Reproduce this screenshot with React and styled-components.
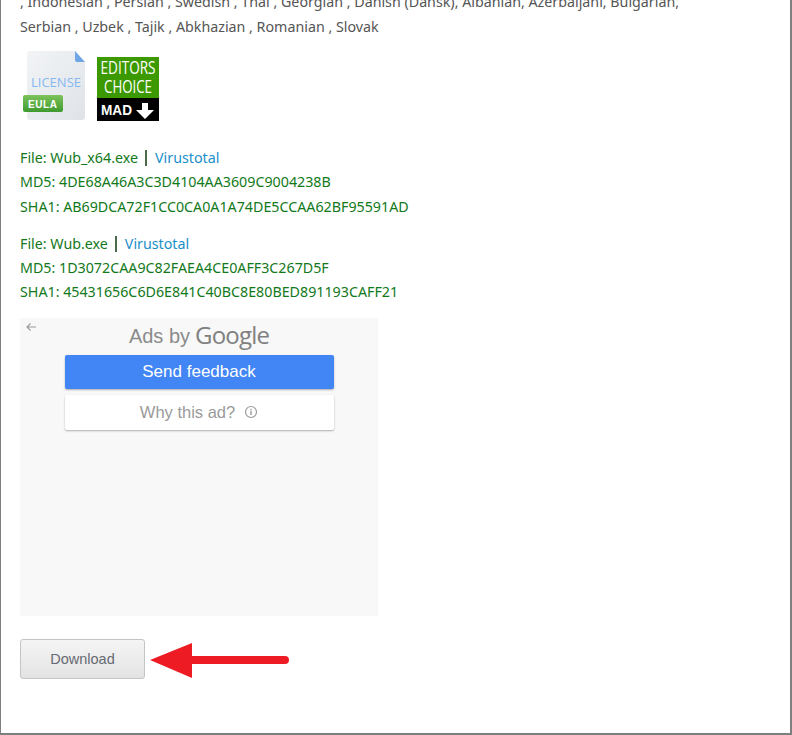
import React from 'react';
import styled, { createGlobalStyle } from 'styled-components';

const GlobalStyle = createGlobalStyle`
  html, body {
    margin: 0;
    padding: 0;
    background: #fff;
  }
`;

const Frame = styled.div`
  position: relative;
  box-sizing: border-box;
  width: 792px;
  height: 735px;
  overflow: hidden;
  background: #fff;
  border-left: 1px solid #7f7f7f;
  border-right: 2px solid #7f7f7f;
  border-bottom: 2px solid #7f7f7f;
  font-family: "Noto Sans", "Open Sans", sans-serif;
  font-size: 14.25px;
`;

const Content = styled.div`
  margin-top: -10px;
  padding-left: 19px;
  display: flex;
  flex-direction: column;
  align-items: flex-start;
`;

const Languages = styled.p`
  margin: 0;
  width: 700px;
  color: #555;
  line-height: 24.5px;
  white-space: nowrap;
`;

const Badges = styled.div`
  display: flex;
  align-items: flex-end;
  gap: 10px;
  margin-top: 12px;
  margin-left: 3px;
`;

const FileBlock = styled.div`
  margin-top: ${(props) => props.$top}px;
  color: #12791a;
  line-height: 24.4px;
`;

const FileLine = styled.div`
  display: flex;
  align-items: center;
`;

const Divider = styled.span`
  width: 2px;
  height: 16px;
  margin: 0 8px 0 7px;
  background: #4a6a4a;
`;

const FileLink = styled.a`
  color: #1a8fc9;
  text-decoration: none;
`;

const AdBox = styled.div`
  box-sizing: border-box;
  position: relative;
  width: 358px;
  height: 298px;
  margin-top: 13px;
  background: #f8f8f8;
  display: flex;
  flex-direction: column;
  align-items: center;
  font-family: "Liberation Sans", Arial, sans-serif;
`;

const BackIcon = styled.svg`
  position: absolute;
  top: 3px;
  left: 5px;
`;

const AdTitle = styled.div`
  height: 37px;
  display: flex;
  align-items: center;
  gap: 5px;
  color: #8b8b8b;
  font-size: 20px;
`;

const GoogleWord = styled.span`
  font-family: "Open Sans", "Liberation Sans", sans-serif;
  font-size: 24px;
  font-weight: 500;
  letter-spacing: -0.8px;
  color: #808080;
  margin-top: -4px;
`;

const AdButton = styled.div`
  box-sizing: border-box;
  width: 269px;
  height: ${(props) => props.$h}px;
  display: flex;
  align-items: center;
  justify-content: center;
  gap: 9px;
  border-radius: 2px;
  font-size: ${(props) => (props.$primary ? 17 : 16.5)}px;
  margin-bottom: 6px;
  background: ${(props) => (props.$primary ? '#4285f4' : '#fff')};
  color: ${(props) => (props.$primary ? '#fff' : '#9a9a9a')};
  box-shadow: 0 1px 2px rgba(0, 0, 0, 0.3);
`;

const DownloadButton = styled.button`
  box-sizing: border-box;
  width: 125px;
  height: 40px;
  margin-top: 23px;
  padding: 0;
  border: 1px solid #c4c4c4;
  border-radius: 3px;
  background: linear-gradient(#f5f5f5, #e3e3e3);
  color: #666a72;
  font-family: "Liberation Sans", Arial, sans-serif;
  font-size: 14.5px;
`;

const ArrowOverlay = styled.svg`
  position: absolute;
  left: 148px;
  top: 643px;
`;

const LicenseIcon = () => (
  <svg width="64" height="70" viewBox="0 0 64 70">
    <defs>
      <linearGradient id="page" x1="0" y1="0" x2="1" y2="1">
        <stop offset="0" stopColor="#f2f4f6" />
        <stop offset="1" stopColor="#dfe3e8" />
      </linearGradient>
      <linearGradient id="eula" x1="0" y1="0" x2="0" y2="1">
        <stop offset="0" stopColor="#7cc35a" />
        <stop offset="1" stopColor="#3f9a2f" />
      </linearGradient>
    </defs>
    <path d="M7 0H52L62 11V66a3 3 0 0 1-3 3H7a3 3 0 0 1-3-3V3a3 3 0 0 1 3-3Z" fill="url(#page)" />
    <path d="M52 0L62 11H54a2 2 0 0 1-2-2Z" fill="#6ea6e6" />
    <text x="8" y="36" fontFamily="Open Sans, sans-serif" fontSize="13" fontWeight="500" fill="#86b8f0" textLength="50" lengthAdjust="spacingAndGlyphs">LICENSE</text>
    <rect x="0" y="44" width="40" height="17" rx="2" fill="url(#eula)" />
    <text x="5" y="57" fontFamily="Liberation Sans, sans-serif" fontSize="10" fontWeight="700" fill="#fff" textLength="29">EULA</text>
  </svg>
);

const EditorsBadge = () => (
  <svg width="62" height="64" viewBox="0 0 62 64">
    <rect width="62" height="41" fill="#3c9a00" />
    <rect y="41" width="62" height="23" fill="#000" />
    <text transform="translate(31 16.500) scale(1 1.350)" textAnchor="middle" fontFamily="Open Sans, sans-serif" fontSize="13" fontWeight="500" fill="#fff" textLength="55" lengthAdjust="spacingAndGlyphs">EDITORS</text>
    <text transform="translate(31 35.500) scale(1 1.350)" textAnchor="middle" fontFamily="Open Sans, sans-serif" fontSize="13" fontWeight="500" fill="#fff" textLength="48" lengthAdjust="spacingAndGlyphs">CHOICE</text>
    <text x="4" y="58" fontFamily="Liberation Sans, sans-serif" fontSize="14" fontWeight="700" fill="#fff" textLength="31" lengthAdjust="spacingAndGlyphs">MAD</text>
    <path d="M45 46h6v7h6L48 62 39 53h6Z" fill="#fff" />
  </svg>
);

const InfoIcon = () => (
  <svg width="14" height="14" viewBox="0 0 14 14">
    <circle cx="7" cy="7" r="5.500" fill="none" stroke="#9a9a9a" strokeWidth="1.200" />
    <rect x="6.300" y="6" width="1.400" height="4" fill="#9a9a9a" />
    <rect x="6.300" y="3.800" width="1.400" height="1.400" fill="#9a9a9a" />
  </svg>
);

const App = () => (
  <>
    <GlobalStyle />
    <Frame>
      <Content>
        <Languages>, Indonesian , Persian , Swedish , Thai , Georgian , Danish (Dansk), Albanian, Azerbaijani, Bulgarian,</Languages>
        <Languages>Serbian , Uzbek , Tajik , Abkhazian , Romanian , Slovak</Languages>
        <Badges>
          <LicenseIcon />
          <EditorsBadge />
        </Badges>
        <FileBlock $top={25}>
          <FileLine>File: Wub_x64.exe<Divider /><FileLink href="#">Virustotal</FileLink></FileLine>
          <div>MD5: 4DE68A46A3C3D4104AA3609C9004238B</div>
          <div>SHA1: AB69DCA72F1CC0CA0A1A74DE5CCAA62BF95591AD</div>
        </FileBlock>
        <FileBlock $top={12.400}>
          <FileLine>File: Wub.exe<Divider /><FileLink href="#">Virustotal</FileLink></FileLine>
          <div>MD5: 1D3072CAA9C82FAEA4CE0AFF3C267D5F</div>
          <div>SHA1: 45431656C6D6E841C40BC8E80BED891193CAFF21</div>
        </FileBlock>
        <AdBox>
          <BackIcon width="12" height="12" viewBox="0 0 12 12">
            <path d="M11 6H2M5.500 2.500L2 6l3.500 3.500" fill="none" stroke="#999" strokeWidth="1.100" />
          </BackIcon>
          <AdTitle>Ads by <GoogleWord>Google</GoogleWord></AdTitle>
          <AdButton $primary $h={34}>Send feedback</AdButton>
          <AdButton $h={35}>Why this ad? <InfoIcon /></AdButton>
        </AdBox>
        <DownloadButton>Download</DownloadButton>
      </Content>
      <ArrowOverlay width="145" height="40" viewBox="0 0 145 40">
        <path d="M1 17L43 0V13H136a3.500 3.500 0 0 1 0 8H43V35Z" fill="#ed1c24" />
      </ArrowOverlay>
    </Frame>
  </>
);

export default App;
